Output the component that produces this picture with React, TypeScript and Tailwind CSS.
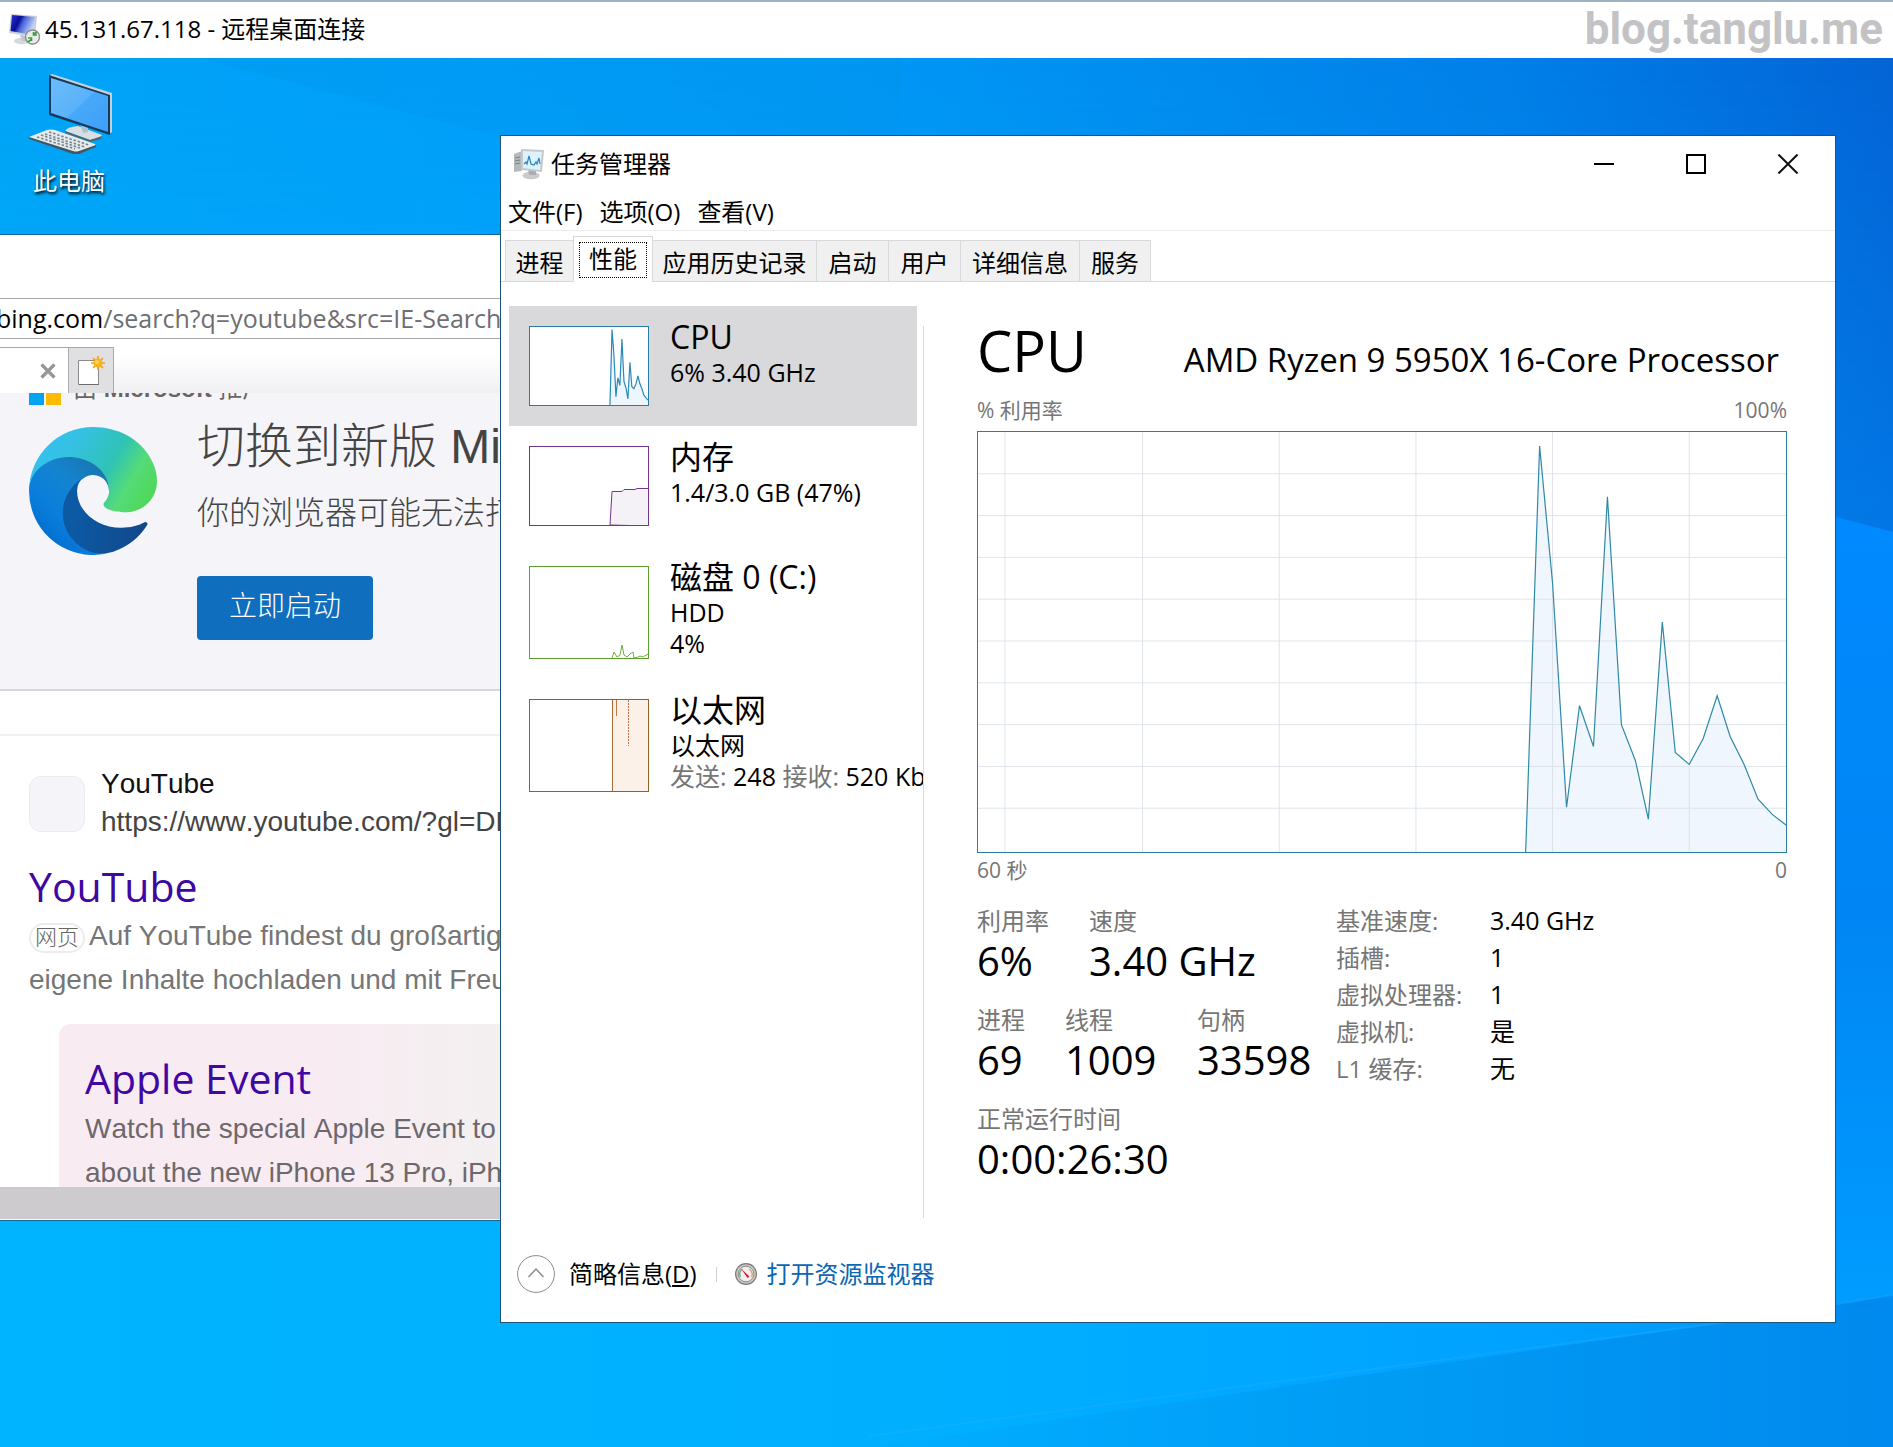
import { useState } from "react";

// ── Data ──────────────────────────────────────────────────────────────────────

const TABS = [
  { label: "进程", width: "w-[69px]" },
  { label: "性能", width: "w-[80px]" },
  { label: "应用历史记录", width: "w-[165px]" },
  { label: "启动", width: "w-[73px]" },
  { label: "用户", width: "w-[73px]" },
  { label: "详细信息", width: "w-[120px]" },
  { label: "服务", width: "w-[72px]" },
];

const MENUS = ["文件(F)", "选项(O)", "查看(V)"];

// CPU history, in an 810 x 422 box
const CPU_POINTS =
  "549,422 563,14 576,152 590,377 603,275 617,316 631,65 645,294 659,330 672,389 686,191 699,322 713,334 727,308 741,265 754,306 768,334 782,369 796,384 810,395";

const CPU_DETAILS = [
  { label: "基准速度:", value: "3.40 GHz" },
  { label: "插槽:", value: "1" },
  { label: "虚拟处理器:", value: "1" },
  { label: "虚拟机:", value: "是" },
  { label: "L1 缓存:", value: "无" },
];

const STAT_ROWS = [
  [
    { label: "利用率", value: "6%", width: "w-[112px]" },
    { label: "速度", value: "3.40 GHz", width: "w-[200px]" },
  ],
  [
    { label: "进程", value: "69", width: "w-[88px]" },
    { label: "线程", value: "1009", width: "w-[132px]" },
    { label: "句柄", value: "33598", width: "w-[120px]" },
  ],
  [{ label: "正常运行时间", value: "0:00:26:30", width: "w-[240px]" }],
];

// ── Icons ─────────────────────────────────────────────────────────────────────

function RemoteIcon() {
  return (
    <svg viewBox="0 0 32 32" className="h-8 w-8 shrink-0" aria-hidden="true">
      <defs>
        <linearGradient id="rdScreen" x1="0" y1="0" x2="1" y2="0.4">
          <stop offset="0" stopColor="#2a35dc" />
          <stop offset="0.4" stopColor="#0a0c96" />
          <stop offset="0.58" stopColor="#4a66dc" />
          <stop offset="1" stopColor="#c3d4f8" />
        </linearGradient>
      </defs>
      <ellipse cx="13" cy="28" rx="8" ry="3.200" fill="#d5d8dc" />
      <path d="M11 22l9 1-1 5h-6z" fill="#c3c7cc" />
      <path d="M2 1l26 2-2 21L0 20z" fill="#c9d0dc" />
      <path d="M3 2l23 2-2 18L1.500 18z" fill="url(#rdScreen)" />
      <circle cx="23.500" cy="24" r="7" fill="#e9ece9" stroke="#8b908c" strokeWidth="1.400" />
      <path d="M19 25h3.500v3M23 26l-4 3M28 22h-3.500v-3M24 22l4-3" stroke="#3f9a45" strokeWidth="1.600" fill="none" />
    </svg>
  );
}

function ComputerIcon() {
  return (
    <svg viewBox="0 0 84 80" className="h-20 w-[84px]" aria-hidden="true">
      <defs>
        <linearGradient id="pcScreen" x1="0" y1="0" x2="1" y2="1">
          <stop offset="0" stopColor="#6cbcfb" />
          <stop offset="0.5" stopColor="#5ab2fa" />
          <stop offset="0.52" stopColor="#48a8fa" />
          <stop offset="1" stopColor="#3d9ff8" />
        </linearGradient>
      </defs>
      <path d="M21 1l2-1 60 19v39l-3 2z" fill="#c5d0d9" />
      <path d="M36 57q2-4 13-5l24 9-2 3-10 2z" fill="#d8dee2" />
      <path d="M36 57l25 9 12-4-1 3-11 3-25-9z" fill="#4c6673" />
      <path d="M51 50l8 3v5l-5 1z" fill="#a9c3d2" />
      <path d="M20 1l61 20v40L20 41z" fill="#163a5c" />
      <path d="M22 4l57 18v36L22 39z" fill="url(#pcScreen)" />
      <path d="M0 63l18-7q4-1 8 0l40 14q1 1 0 2l-16 7q-3 1-6 0L1 65z" fill="#e7eaec" />
      <path d="M0 63l44 14q3 1 6 0l17-6v2l-17 7q-3 1-6 0L0 65z" fill="#3d5866" />
      <g stroke="#76868f" strokeWidth="1.600" strokeDasharray="2.500 1.800">
        <path d="M20 58l40 13M16 60l40 13M12 61l39 13M8 63l38 12" />
      </g>
    </svg>
  );
}

function NewTabIcon() {
  return (
    <svg viewBox="0 0 28 30" className="h-[30px] w-7" aria-hidden="true">
      <path d="M1.500 4.500h20v24h-20z" fill="#fff" stroke="#8a8a8a" />
      <path d="M2 28.500h20" stroke="#6d6d6d" />
      <g stroke="#eaa21a" strokeWidth="1.600">
        <path d="M21 0v14M14 7h14M16 2l10 10M26 2L16 12" />
      </g>
      <circle cx="21" cy="7" r="4.500" fill="#f7b21c" />
      <circle cx="20" cy="6" r="2" fill="#ffd35a" />
    </svg>
  );
}

function EdgeLogo() {
  return (
    <svg viewBox="0 0 256 256" className="mt-[22px] h-32 w-32 shrink-0" aria-hidden="true">
      <defs>
        <linearGradient id="edgeDark" x1="0.2" y1="0.5" x2="0.95" y2="0.6">
          <stop offset="0" stopColor="#0c59a4" />
          <stop offset="1" stopColor="#114a8b" />
        </linearGradient>
        <linearGradient id="edgeBlue" x1="0.9" y1="0.1" x2="0.2" y2="1">
          <stop offset="0" stopColor="#1b72a8" />
          <stop offset="0.35" stopColor="#1484cf" />
          <stop offset="0.65" stopColor="#0a7fdb" />
          <stop offset="1" stopColor="#0067cc" />
        </linearGradient>
        <linearGradient id="edgeGreen" x1="0" y1="0.3" x2="1" y2="0.7">
          <stop offset="0" stopColor="#35c1f1" />
          <stop offset="0.3" stopColor="#34c1e0" />
          <stop offset="0.6" stopColor="#2fc3b4" />
          <stop offset="0.8" stopColor="#55db78" />
          <stop offset="1" stopColor="#4fd85a" />
        </linearGradient>
      </defs>
      <g transform="translate(-4.63 -4.92)">
        <path
          fill="url(#edgeDark)"
          d="M235.680 195.460a93.730 93.730 0 0 1-10.540 4.710 101.870 101.870 0 0 1-35.900 6.460c-47.320 0-88.540-32.550-88.540-74.320A31.480 31.480 0 0 1 117.130 105c-42.800 1.800-53.800 46.400-53.800 72.530 0 73.880 68.090 81.370 82.760 81.370 7.910 0 19.840-2.300 27-4.560l1.310-.44a128.340 128.340 0 0 0 66.600-52.800 4 4 0 0 0-5.320-5.640z"
        />
        <path
          fill="url(#edgeBlue)"
          d="M110.340 246.340A79.200 79.200 0 0 1 87.600 225a80.720 80.720 0 0 1 29.530-120c3.120-1.470 8.450-4.130 15.540-4a32.350 32.350 0 0 1 25.690 13 31.880 31.880 0 0 1 6.360 18.660c0-.21 24.460-79.600-80-79.600-43.900 0-80 41.660-80 78.210a130.150 130.150 0 0 0 12.110 56 128 128 0 0 0 156.380 67.110 75.550 75.550 0 0 1-62.780-8z"
        />
        <path
          fill="url(#edgeGreen)"
          d="M156.940 153.780c-.81 1.050-3.300 2.500-3.300 5.660 0 2.610 1.700 5.120 4.720 7.230 14.380 10 41.490 8.680 41.560 8.680a59.560 59.560 0 0 0 30.270-8.350 61.380 61.380 0 0 0 30.430-52.880c.26-22.410-8-37.310-11.340-43.910-21.190-41.440-66.920-65.280-116.650-65.280A128 128 0 0 0 4.630 131.150c.48-36.540 36.800-66.050 80-66.050 3.500 0 23.460.34 42 10.070 16.340 8.580 24.900 18.940 30.850 29.210 6.180 10.670 7.280 24.150 7.280 29.520s-2.740 13.330-7.800 19.880z"
        />
      </g>
    </svg>
  );
}

function TaskManagerIcon() {
  return (
    <svg viewBox="0 0 32 34" className="h-[34px] w-8 shrink-0" aria-hidden="true">
      <path d="M1 7l8-3v20l-8 1z" fill="#b4b9bc" />
      <path d="M2 11l5-1M2 14l5-1M2 17l5-1" stroke="#7a8185" />
      <ellipse cx="18" cy="28.500" rx="8.500" ry="3.800" fill="#c9cccf" />
      <path d="M15 22h8v6h-7z" fill="#a9aeb2" />
      <path d="M8 2l23 1-2 22-21-2z" fill="#c4c9cc" />
      <path d="M10 4l19 1-2 18-17-2z" fill="#dcf2fd" />
      <path d="M11 17l2-2 1 2 2-8 2 8 3 1 2-3 1 2 2-6 1 6" stroke="#2b84bb" strokeWidth="1.200" fill="none" />
    </svg>
  );
}

function GaugeIcon() {
  return (
    <svg viewBox="0 0 24 24" className="h-6 w-6 shrink-0" aria-hidden="true">
      <circle cx="12" cy="12" r="11" fill="#7b7a7a" />
      <circle cx="12" cy="12" r="9.800" fill="#c9c6c4" />
      <circle cx="12" cy="12" r="7.800" fill="#f1efed" stroke="#918d8a" />
      <path d="M6.500 15a6 6 0 0 1 2-8" stroke="#6aa783" strokeWidth="1.300" fill="none" />
      <path d="M15 7a6 6 0 0 1 2.500 8" stroke="#d9a36a" strokeWidth="1.300" fill="none" />
      <path d="M7 6.500l8.500 8-2 1.500z" fill="#d3202a" />
    </svg>
  );
}

// ── Wallpaper ─────────────────────────────────────────────────────────────────

function Wallpaper() {
  return (
    <svg
      viewBox="0 58 1893 1389"
      preserveAspectRatio="none"
      className="absolute inset-0 h-full w-full"
      aria-hidden="true"
    >
      <defs>
        <linearGradient id="wallBase" x1="0" y1="0" x2="1" y2="0">
          <stop offset="0" stopColor="#00a4f6" />
          <stop offset="0.25" stopColor="#009ffa" />
          <stop offset="0.5" stopColor="#0095f4" />
          <stop offset="0.8" stopColor="#007fe8" />
          <stop offset="1" stopColor="#0464d6" />
        </linearGradient>
        <linearGradient id="wallLow" x1="0" y1="0" x2="1" y2="0">
          <stop offset="0" stopColor="#00b4ff" />
          <stop offset="0.5" stopColor="#00b0ff" />
          <stop offset="0.8" stopColor="#00a2ff" />
          <stop offset="1" stopColor="#0094fb" />
        </linearGradient>
        <linearGradient id="wallFade" x1="0" y1="0" x2="0" y2="1">
          <stop offset="0" stopColor="#fff" stopOpacity="0" />
          <stop offset="0.6" stopColor="#fff" stopOpacity="0.7" />
          <stop offset="0.85" stopColor="#fff" />
        </linearGradient>
        <linearGradient id="wallRight" x1="0" y1="0" x2="0" y2="1">
          <stop offset="0" stopColor="#008aff" />
          <stop offset="0.5" stopColor="#0086f4" />
          <stop offset="1" stopColor="#009dff" />
        </linearGradient>
        <linearGradient id="wallCorner" x1="0" y1="0" x2="1" y2="0">
          <stop offset="0" stopColor="#00a8fc" stopOpacity="0.3" />
          <stop offset="0.5" stopColor="#009cf4" />
          <stop offset="1" stopColor="#0089ee" />
        </linearGradient>
        <mask id="wallMask">
          <rect y="58" width="1893" height="1389" fill="url(#wallFade)" />
        </mask>
      </defs>
      <rect y="58" width="1893" height="1389" fill="url(#wallBase)" />
      <rect y="58" width="1893" height="1389" fill="url(#wallLow)" mask="url(#wallMask)" />
      <path d="M200 58h700v200H640L500 137z" fill="#0096ec" opacity="0.35" />
      <path d="M1700 500l136 17 57 15v765l-193 20z" fill="url(#wallRight)" />
      <path d="M869 1447L1720 1323l173-28v152z" fill="url(#wallCorner)" />
      <path d="M869 1436L1720 1323l173-28" stroke="#2cb0ff" strokeWidth="2" opacity="0.3" fill="none" />
    </svg>
  );
}

// ── Browser window ────────────────────────────────────────────────────────────

function BrowserWindow() {
  return (
    <section
      aria-label="bing.com"
      className="absolute left-0 top-44 w-[520px] overflow-hidden whitespace-nowrap border-y border-[#14679c] bg-white"
    >
      <div className="h-[63px]" />
      <div className="flex h-[41px] items-center border-y border-[#a9a9ad] text-[25px] leading-[39px] text-[#6f6e72]">
        <span className="-ml-1 text-black">bing.com</span>/search?q=youtube&amp;src=IE-SearchBox
      </div>
      <div className="bg-linear-to-b from-white from-30% to-[#f0eff2] pt-2">
        <div className="flex h-[46px]">
          <div className="flex w-[68px] items-center justify-end border-t border-[#a9a9ad] bg-white pr-3">
            <button type="button" aria-label="关闭选项卡">
              <svg viewBox="0 0 16 16" className="h-4 w-4">
                <path d="M1.500 1.500l13 13M14.500 1.500l-13 13" stroke="#97979b" strokeWidth="3.200" />
              </svg>
            </button>
          </div>
          <button
            type="button"
            aria-label="新建选项卡"
            className="flex w-[46px] items-center justify-center border-x border-t border-[#a9a9ad] bg-[#e0dfe1]"
          >
            <NewTabIcon />
          </button>
        </div>
      </div>

      <div className="h-[794px] overflow-hidden font-['Liberation_Sans','Noto_Sans_CJK_SC',sans-serif] [font-kerning:none]">
        {/* Edge banner, scrolled a little way up */}
        <div className="h-[298px] overflow-hidden border-b-2 border-[#d8d7db] bg-[#f5f4f8] pl-[29px]">
          <div className="-mt-4 flex h-7 gap-3">
            <svg viewBox="0 0 32 32" className="h-8 w-8 shrink-0 self-end" aria-hidden="true">
              <path d="M0 0h15v15H0z" fill="#f25022" />
              <path d="M17 0h15v15H17z" fill="#7fba00" />
              <path d="M0 17h15v15H0z" fill="#00a4ef" />
              <path d="M17 17h15v15H17z" fill="#ffb900" />
            </svg>
            <span className="text-2xl leading-6 text-[#666]">
              由 <b>Microsoft</b> 推广
            </span>
          </div>
          <div className="flex gap-10">
            <EdgeLogo />
            <div className="mt-[14px] text-[#444]">
              <h2 className="text-5xl font-light leading-[56px]">切换到新版 Microsoft Edge</h2>
              <p className="mt-[18px] text-[32px] font-light leading-10">你的浏览器可能无法打开此页面</p>
              <button
                type="button"
                className="mt-[43px] h-16 w-44 rounded bg-[#106ebe] pb-0.5 text-[28px] font-light leading-10 text-white"
              >
                立即启动
              </button>
            </div>
          </div>
        </div>

        <div className="mt-[43px] border-t-2 border-[#f0eff1] pl-[29px] text-[28px]">
          <div className="flex gap-4 pt-[29px] leading-[38px]">
            <div className="mt-[11px] h-14 w-14 rounded-xl border border-[#ebeaee] bg-[#f5f4f8]" />
            <div>
              <div className="text-[#111]">YouTube</div>
              <div className="text-[#444]">https://www.youtube.com/?gl=DE</div>
            </div>
          </div>
          <h2 className="mt-[17px] font-['Open_Sans',sans-serif] text-[41px] leading-[56px] text-[#4007a2]">
            <a href="#youtube">YouTube</a>
          </h2>
          <p className="leading-11 text-[#767676]">
            <span className="mr-1 inline-block h-[30px] w-14 rounded-full border-2 border-[#ececec] text-center align-middle text-[22px] font-light leading-[26px] text-[#666]">
              网页
            </span>
            Auf YouTube findest du großartige Videos
            <br />
            eigene Inhalte hochladen und mit Freunden
          </p>
          <div className="ml-[30px] mt-[22px] rounded-tl-xl bg-linear-to-r from-[#f8ecf2] from-60% to-[#f2f0f1] pl-[26px] pt-[26px]">
            <h3 className="mb-px font-['Open_Sans',sans-serif] text-[41px] leading-[56px] text-[#4007a2]">
              <a href="#apple-event">Apple Event</a>
            </h3>
            <p className="leading-11 text-[#6e686c]">
              Watch the special Apple Event to learn
              <br />
              about the new iPhone 13 Pro, iPhone 13
            </p>
          </div>
        </div>
      </div>
      <div className="h-8 bg-[#cdcbce]" />
      <div className="h-px bg-white" />
    </section>
  );
}

// ── Task manager ──────────────────────────────────────────────────────────────

function CpuSpark() {
  return (
    <svg
      viewBox="0 0 810 422"
      preserveAspectRatio="none"
      className="h-20 w-[120px] shrink-0 border border-[#2a7ba5] bg-white"
      aria-hidden="true"
    >
      <polygon points={`${CPU_POINTS} 810,422`} fill="#eef6fd" />
      <polyline points={CPU_POINTS} fill="none" stroke="#2a8ab8" strokeWidth="1.200" vectorEffect="non-scaling-stroke" />
    </svg>
  );
}

function MemorySpark() {
  return (
    <svg viewBox="0 0 118 78" className="h-20 w-[120px] shrink-0 border border-[#75358c] bg-white" aria-hidden="true">
      <path d="M80 78l2-33.500h10l2-2h11l2-1h12V79z" fill="#f4f1f7" stroke="#75358c" />
    </svg>
  );
}

function DiskSpark() {
  return (
    <svg viewBox="0 0 118 91" className="h-[93px] w-[120px] shrink-0 border border-[#5f9f2f] bg-white" aria-hidden="true">
      <path
        d="M82 91l2-6 3 5 3-2 2-10 2 10 3 2 3-3 3-2 1 6 4-1 2-1 3 1 5-3"
        fill="none"
        stroke="#6fb13c"
      />
    </svg>
  );
}

function EthernetSpark() {
  return (
    <svg viewBox="0 0 118 91" className="h-[93px] w-[120px] shrink-0 border border-[#8f6420] bg-white" aria-hidden="true">
      <path d="M82 0h36v91H82z" fill="#fcf1e8" />
      <path d="M82.500 0v91" stroke="#a86a30" />
      <path d="M86.500 0v16" stroke="#c67446" />
      <path d="M98.500 0v46" stroke="#c67446" strokeDasharray="2 1" />
    </svg>
  );
}

const RESOURCES = [
  { id: "cpu", title: "CPU", spark: <CpuSpark />, lines: ["6% 3.40 GHz"] },
  { id: "mem", title: "内存", spark: <MemorySpark />, lines: ["1.4/3.0 GB (47%)"] },
  { id: "disk", title: "磁盘 0 (C:)", spark: <DiskSpark />, lines: ["HDD", "4%"] },
  { id: "eth", title: "以太网", spark: <EthernetSpark />, lines: ["以太网"], traffic: true },
];

function ResourceList() {
  const [selected, setSelected] = useState("cpu");

  return (
    <div className="w-[422px] shrink-0 overflow-hidden pl-2 pt-6">
      {RESOURCES.map((r) => (
        <button
          key={r.id}
          type="button"
          onClick={() => setSelected(r.id)}
          className={`flex w-[408px] gap-[21px] whitespace-nowrap pl-5 text-left ${
            selected === r.id ? "bg-[#d9d8da]" : ""
          }`}
        >
          <span className="py-5">{r.spark}</span>
          <span className="pt-[11px] text-[25px] leading-[31px]">
            <span className="block text-[32px] leading-10">{r.title}</span>
            {r.lines.map((line) => (
              <span key={line} className="block">
                {line}
              </span>
            ))}
            {r.traffic && (
              <span className="block">
                <span className="text-[#767676]">发送:</span> 248 <span className="text-[#767676]">接收:</span> 520 Kbps
              </span>
            )}
          </span>
        </button>
      ))}
    </div>
  );
}

function CpuChart() {
  return (
    <svg
      viewBox="0 0 810 422"
      preserveAspectRatio="none"
      className="mt-[7px] h-[422px] w-full border border-[#2a7f9f]"
      role="img"
      aria-label="% 利用率"
    >
      <polygon points={`${CPU_POINTS} 810,422`} fill="#eff6fd" />
      <g stroke="#dbe1e8" strokeWidth="1" opacity="0.9">
        {[1, 2, 3, 4, 5, 6, 7, 8, 9].map((i) => (
          <line key={i} x1="0" x2="810" y1={i * 42} y2={i * 42} vectorEffect="non-scaling-stroke" />
        ))}
        {[27, 165, 302, 439, 576, 713].map((x) => (
          <line key={x} x1={x} x2={x} y1="0" y2="422" vectorEffect="non-scaling-stroke" />
        ))}
      </g>
      <polyline points={CPU_POINTS} fill="none" stroke="#2f88a8" strokeWidth="1.200" vectorEffect="non-scaling-stroke" />
    </svg>
  );
}

function CpuPanel() {
  return (
    <div className="min-w-0 flex-1 whitespace-nowrap pl-[53px] pr-12 pt-9">
      <div className="flex h-16 items-baseline justify-between pr-2 leading-[64px]">
        <h1 className="text-[56px]">CPU</h1>
        <span className="text-[33px]">AMD Ryzen 9 5950X 16-Core Processor</span>
      </div>
      <div className="mt-[14px] flex justify-between text-[21px] leading-7 text-[#767676]">
        <span>% 利用率</span>
        <span>100%</span>
      </div>
      <CpuChart />
      <div className="mt-[3px] flex justify-between text-[21px] leading-7 text-[#767676]">
        <span>60 秒</span>
        <span>0</span>
      </div>

      <div className="mt-[18px] flex">
        <div className="flex w-[359px] shrink-0 flex-col gap-[18px]">
          {STAT_ROWS.map((row) => (
            <dl key={row[0].label} className="flex">
              {row.map((s) => (
                <div key={s.label} className={s.width}>
                  <dt className="text-2xl leading-[37px] text-[#767676]">{s.label}</dt>
                  <dd className="text-[40px] leading-11">{s.value}</dd>
                </div>
              ))}
            </dl>
          ))}
        </div>
        <dl className="leading-[37px]">
          {CPU_DETAILS.map((d) => (
            <div key={d.label} className="flex">
              <dt className="w-[154px] text-2xl leading-[37px] text-[#767676]">{d.label}</dt>
              <dd className="text-[25px]">{d.value}</dd>
            </div>
          ))}
        </dl>
      </div>
    </div>
  );
}

function TaskManager() {
  const [tab, setTab] = useState("性能");

  return (
    <section
      aria-label="任务管理器"
      className="absolute left-[500px] right-[57px] top-[77px] border border-[#1c5478] bg-white text-2xl"
    >
      <header className="flex h-[58px] items-center pb-0.5 pl-3">
        <TaskManagerIcon />
        <span className="ml-[6px] flex-1">任务管理器</span>
        <div className="flex gap-[72px] pr-[37px]">
          <button type="button" aria-label="最小化">
            <svg viewBox="0 0 20 20" className="h-5 w-5">
              <path d="M0 10h20" stroke="#000" strokeWidth="2" />
            </svg>
          </button>
          <button type="button" aria-label="最大化">
            <svg viewBox="0 0 20 20" className="h-5 w-5">
              <path d="M1 1h18v18H1z" stroke="#000" strokeWidth="2" fill="none" />
            </svg>
          </button>
          <button type="button" aria-label="关闭">
            <svg viewBox="0 0 20 20" className="h-5 w-5">
              <path d="M.5.5l19 19M19.500.5l-19 19" stroke="#111" strokeWidth="2" />
            </svg>
          </button>
        </div>
      </header>

      <nav className="flex h-[37px] gap-[17px] border-b border-[#ececf0] pl-[7px] leading-9">
        {MENUS.map((m) => (
          <button key={m} type="button">
            {m}
          </button>
        ))}
      </nav>

      <div role="tablist" className="flex h-[51px] items-end border-b border-[#d9d9dc] pl-1">
        {TABS.map((t) =>
          t.label === tab ? (
            <button
              key={t.label}
              type="button"
              role="tab"
              aria-selected="true"
              className={`-mb-px -mr-px h-[46px] border border-b-0 border-[#d9d9dc] bg-white p-[5px] pb-1 ${t.width}`}
            >
              <span className="flex h-full items-center justify-center border border-dotted border-black pb-0.5 leading-8">
                {t.label}
              </span>
            </button>
          ) : (
            <button
              key={t.label}
              type="button"
              role="tab"
              aria-selected="false"
              onClick={() => setTab(t.label)}
              className={`-mr-px h-[41px] border border-b-0 border-[#d9d9dc] bg-[#f0f0f0] pt-1 leading-9 ${t.width}`}
            >
              {t.label}
            </button>
          )
        )}
      </div>

      <div className="flex min-h-[936px]">
        <ResourceList />
        <div className="mt-11 w-px bg-[#d9d8dc]" />
        <CpuPanel />
      </div>

      <footer className="flex items-center pb-[29px] pl-4 pt-[37px]">
        <button type="button" className="flex items-center gap-[14px]">
          <svg viewBox="0 0 38 38" className="h-[38px] w-[38px]" aria-hidden="true">
            <circle cx="19" cy="19" r="18.400" fill="none" stroke="#8c8790" />
            <path d="M11.500 22l7.500-8 7.500 8" fill="none" stroke="#8c8790" strokeWidth="1.400" />
          </svg>
          <span>
            简略信息(<u className="underline-offset-2">D</u>)
          </span>
        </button>
        <span className="ml-[19px] mr-[17px] h-[15px] w-px bg-[#d0d0d4]" />
        <a href="#resmon" className="flex items-center gap-[9px] text-[#0b66b5]">
          <GaugeIcon />
          打开资源监视器
        </a>
      </footer>
    </section>
  );
}

// ── Page ──────────────────────────────────────────────────────────────────────

export default function App() {
  return (
    <div className="flex min-h-screen flex-col overflow-hidden bg-white font-['Open_Sans','Noto_Sans_CJK_SC',sans-serif] text-black">
      <header className="flex h-[58px] items-center justify-between border-t-2 border-[#9db1c2] pb-0.5 pl-[9px] pr-[10px]">
        <div className="flex items-center gap-1 text-2xl">
          <RemoteIcon />
          45.131.67.118 - 远程桌面连接
        </div>
        <span className="font-['Roboto',sans-serif] text-[44px] font-bold leading-[52px] text-[#c3c3c5]">
          blog.tanglu.me
        </span>
      </header>

      <main className="relative flex-1 overflow-hidden bg-[#00a8fc]">
        <Wallpaper />
        <div className="absolute left-[29px] top-4 flex w-[84px] flex-col items-center">
          <ComputerIcon />
          <span className="mt-2 whitespace-nowrap pr-1 text-2xl leading-[38px] text-white [text-shadow:1px_2px_3px_#000]">
            此电脑
          </span>
        </div>
        <BrowserWindow />
        <TaskManager />
      </main>
    </div>
  );
}
